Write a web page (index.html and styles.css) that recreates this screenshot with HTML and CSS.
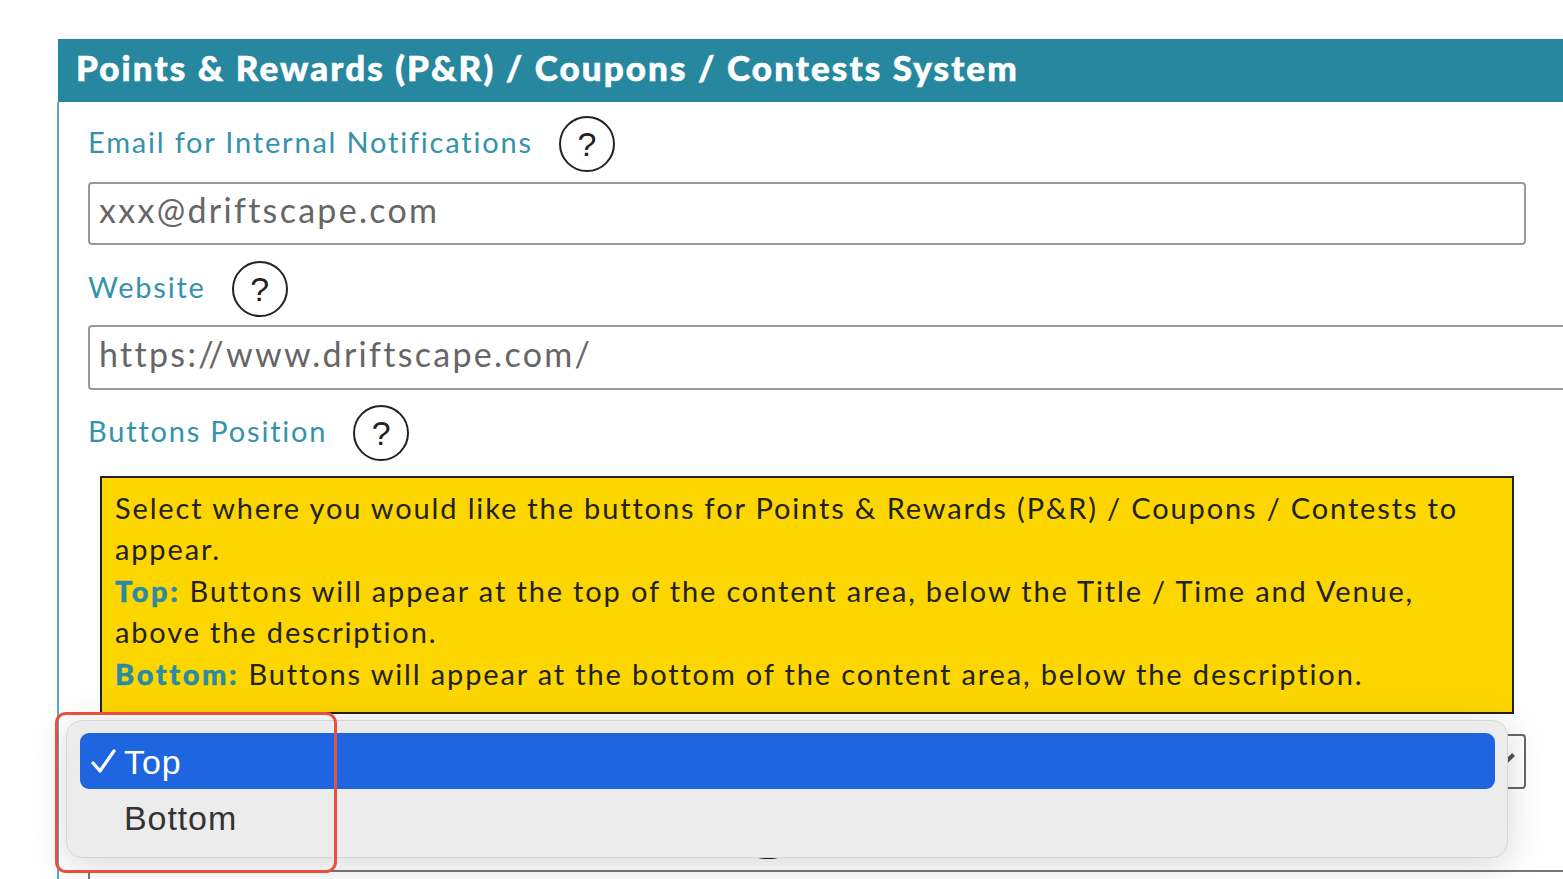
FILE: index.html
```html
<!DOCTYPE html>
<html lang="en">
<head>
  <meta charset="UTF-8">
  <meta name="viewport" content="width=device-width, initial-scale=1.0">
  <title>Points &amp; Rewards Settings</title>
  <link rel="stylesheet" href="styles.css">
</head>
<body>
  <div class="panel">
    <div class="panel-header">Points &amp; Rewards (P&amp;R) / Coupons / Contests System</div>
    <div class="panel-body">
      <!-- Email -->
      <div class="field-label">
        <span class="label-text">Email for Internal Notifications</span>
        <span class="help-btn">?</span>
      </div>
      <div class="text-input input-short">xxx@driftscape.com</div>

      <!-- Website -->
      <div class="field-label">
        <span class="label-text">Website</span>
        <span class="help-btn">?</span>
      </div>
      <div class="text-input input-wide">https://www.driftscape.com/</div>

      <!-- Buttons position -->
      <div class="field-label">
        <span class="label-text">Buttons Position</span>
        <span class="help-btn">?</span>
      </div>
      <div class="notice">
        <p>Select where you would like the buttons for Points &amp; Rewards (P&amp;R) / Coupons / Contests to appear.</p>
        <p><b>Top:</b> Buttons will appear at the top of the content area, below the Title / Time and Venue, above the description.</p>
        <p><b>Bottom:</b> Buttons will appear at the bottom of the content area, below the description.</p>
      </div>
      <div class="select-box"><span class="select-arrow"></span></div>
      <div class="next-input"></div>
    </div>
  </div>

  <!-- Native select popup, open over the form -->
  <div class="peek-mark"></div>
  <div class="select-menu">
    <div class="menu-item selected">
      <svg class="menu-check" width="26" height="24" viewBox="0 0 26 24">
        <path d="M3 14 L10 22 L24 2" fill="none" stroke="#fff" stroke-width="3.2" stroke-linecap="round" stroke-linejoin="round"/>
      </svg>
      <span>Top</span>
    </div>
    <div class="menu-item"><span>Bottom</span></div>
  </div>
  <div class="callout"></div>
</body>
</html>
```

FILE: styles.css
```css
* {
  margin: 0;
  padding: 0;
  box-sizing: border-box;
}

body {
  font-family: Lato, 'Open Sans', sans-serif;
  background: #fff;
  height: 100vh;
  overflow: hidden;
  padding: 39px 0 0 57px;
}

.panel {
  width: 1600px;
}

.panel-header {
  background: #26879f;
  color: white;
  height: 63px;
  margin-left: 1px;
  padding-left: 18px;
  font-size: 35px;
  font-weight: 900;
  line-height: 56px;
  letter-spacing: 2.1px;
  -webkit-text-stroke: 0.6px white;
  white-space: nowrap;
}

.panel-body {
  border-left: 2px solid #5fa9bc;
  padding: 14px 0 0 29px;
  height: 800px;
}

.field-label {
  display: flex;
  align-items: center;
  gap: 26px;
  height: 56px;
  color: #3493ab;
  font-size: 29px;
  letter-spacing: 1.8px;
}

.label-text {
  padding-bottom: 6px;
}

.help-btn {
  width: 56px;
  height: 56px;
  border: 2px solid #222;
  border-radius: 50%;
  display: flex;
  align-items: center;
  justify-content: center;
  color: #222;
  font-family: 'Liberation Sans', Arial, sans-serif;
  font-size: 34px;
  letter-spacing: 0;
}

.text-input {
  border: 2px solid #999;
  border-radius: 4px;
  color: #666;
  font-size: 34px;
  letter-spacing: 2.3px;
  padding: 0 0 8px 9px;
  display: flex;
  align-items: center;
  white-space: nowrap;
}

.input-short {
  width: 1438px;
  height: 63px;
  margin: 10px 0 16px;
}

.input-wide {
  width: 1500px;
  height: 65px;
  margin: 8px 0 15px;
}

.notice {
  width: 1414px;
  height: 238px;
  margin: 15px 0 0 12px;
  background: #fdd600;
  border: 2px solid #222;
  padding: 9px 13px;
  color: #222;
  font-size: 29px;
  line-height: 41.4px;
  letter-spacing: 1.85px;
}

.notice b {
  color: #2a8ba3;
  font-weight: 900;
  letter-spacing: 2.6px;
  -webkit-text-stroke: 0.4px #2a8ba3;
}

.select-box {
  position: relative;
  width: 1438px;
  height: 55px;
  margin-top: 20px;
  border: 2px solid #666;
  border-radius: 4px;
  overflow: hidden;
}

.select-arrow {
  position: absolute;
  right: 9px;
  top: 20px;
  width: 10px;
  height: 4px;
  background: #555;
  transform: rotate(-45deg);
}

.next-input {
  width: 1500px;
  height: 20px;
  margin-top: 81px;
  border-top: 2px solid #777;
  border-left: 2px solid #777;
  border-top-left-radius: 4px;
}

.peek-mark {
  position: absolute;
  left: 757px;
  top: 855px;
  width: 22px;
  height: 4px;
  border-radius: 50%;
  background: #222;
}

.select-menu {
  position: absolute;
  left: 66px;
  top: 720px;
  width: 1442px;
  height: 138px;
  background: #ececec;
  border: 1px solid #d6d6d6;
  border-radius: 16px;
  box-shadow: 0 6px 36px rgba(0, 0, 0, 0.16);
  padding: 12px 12px 0 13px;
  font-family: 'Liberation Sans', Arial, sans-serif;
  font-size: 34px;
  letter-spacing: 0.9px;
  color: #333;
}

.menu-item {
  display: flex;
  align-items: center;
  height: 56px;
  padding: 2px 0 0 44px;
  position: relative;
  border-radius: 9px;
}

.menu-item.selected {
  background: #2065e0;
  color: #fff;
}

.menu-check {
  position: absolute;
  left: 10px;
  top: 16px;
}

.callout {
  position: absolute;
  left: 55px;
  top: 712px;
  width: 282px;
  height: 161px;
  border: 3px solid #e5503f;
  border-radius: 11px;
}
```
